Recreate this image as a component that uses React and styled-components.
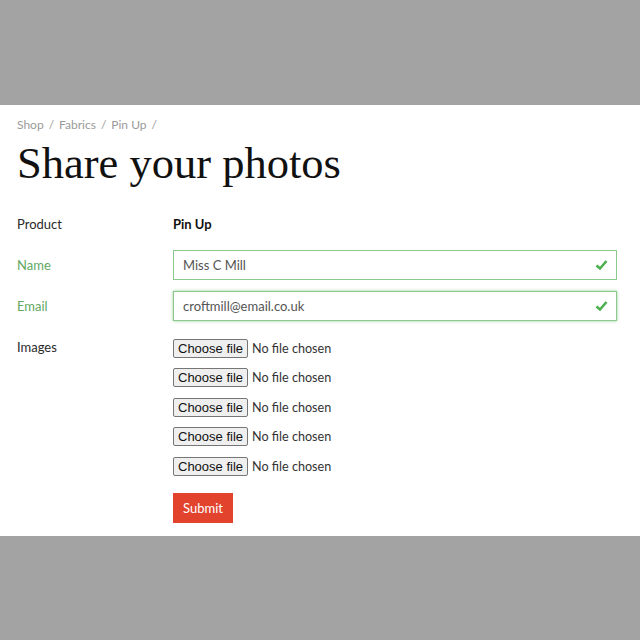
import styled, { createGlobalStyle } from 'styled-components'

const GlobalStyles = createGlobalStyle`
  html, body {
    margin: 0;
    padding: 0;
    background: #a3a3a3;
  }
  body {
    font-family: 'Lato', 'Noto Sans', sans-serif;
  }
`

const Page = styled.div`
  padding: 105px 0;
`

const Sheet = styled.main`
  background: #fff;
  padding: 12px 23px 13px 17px;
`

const Crumbs = styled.nav`
  font-size: 12px;
  color: #9a9a9a;
  line-height: 16px;
  a {
    color: inherit;
    text-decoration: none;
  }
  span {
    margin: 0 5px;
  }
`

const Title = styled.h1`
  font-family: 'Liberation Serif', 'Times New Roman', serif;
  font-weight: 400;
  font-size: 44.5px;
  line-height: 50px;
  color: #111;
  margin: 5px 0 21px;
`

const Form = styled.form`
  display: grid;
  grid-template-columns: 156px 1fr;
  row-gap: 11px;
  align-items: start;
`

const Label = styled.label`
  font-size: 13px;
  line-height: 30px;
  color: ${({ $valid }) => ($valid ? '#62a862' : '#2a2a2a')};
`

const Value = styled.div`
  font-size: 13px;
  font-weight: 700;
  line-height: 30px;
  color: #111;
`

const Field = styled.div`
  position: relative;
`

const Input = styled.input`
  box-sizing: border-box;
  width: 100%;
  height: 30px;
  padding: 0 30px 0 9px;
  font-family: inherit;
  font-size: 13px;
  color: #555;
  border: 1px solid #8cc98c;
  border-radius: 0;
  outline: none;
  box-shadow: ${({ $focus }) => ($focus ? '0 0 3px rgba(90,170,90,0.6)' : 'none')};
`

const Tick = styled.svg`
  position: absolute;
  right: 9px;
  top: 9px;
  width: 13px;
  height: 12px;
`

const Files = styled.div`
  display: flex;
  flex-direction: column;
  gap: 9.5px;
  padding-top: 6px;
`

const FilePick = styled.label`
  display: flex;
  align-items: center;
  gap: 4px;
  height: 20px;
  font-size: 12.6px;
  color: #333;
  input {
    display: none;
  }
`

const FileButton = styled.span`
  box-sizing: border-box;
  height: 19px;
  line-height: 17px;
  padding: 0 4px;
  font-family: 'Liberation Sans', Arial, sans-serif;
  font-size: 13px;
  color: #111;
  background: #efefef;
  border: 1px solid #767676;
  border-radius: 2px;
`

const Submit = styled.button`
  grid-column: 2;
  justify-self: start;
  margin-top: 6px;
  background: #e2432d;
  color: #fff;
  border: none;
  font-family: inherit;
  font-size: 13px;
  height: 30px;
  padding: 0 10px;
`

function Check() {
  return (
    <Tick viewBox="0 0 13 12">
      <path d="M1.5 6.5 L5 9.5 L11.5 2" fill="none" stroke="#4caf50" strokeWidth="2.6" />
    </Tick>
  )
}

function App() {
  return (
    <>
      <GlobalStyles />
      <Page>
        <Sheet>
          <Crumbs>
            <a href="#">Shop</a><span>/</span>
            <a href="#">Fabrics</a><span>/</span>
            <a href="#">Pin Up</a><span>/</span>
          </Crumbs>
          <Title>Share your photos</Title>
          <Form>
            <Label>Product</Label>
            <Value>Pin Up</Value>

            <Label $valid>Name</Label>
            <Field>
              <Input defaultValue="Miss C Mill" />
              <Check />
            </Field>

            <Label $valid>Email</Label>
            <Field>
              <Input $focus defaultValue="croftmill@email.co.uk" />
              <Check />
            </Field>

            <Label>Images</Label>
            <Files>
              {[0, 1, 2, 3, 4].map((i) => (
                <FilePick key={i}>
                  <input type="file" />
                  <FileButton>Choose file</FileButton>
                  No file chosen
                </FilePick>
              ))}
            </Files>

            <Submit type="button">Submit</Submit>
          </Form>
        </Sheet>
      </Page>
    </>
  )
}

export default App
